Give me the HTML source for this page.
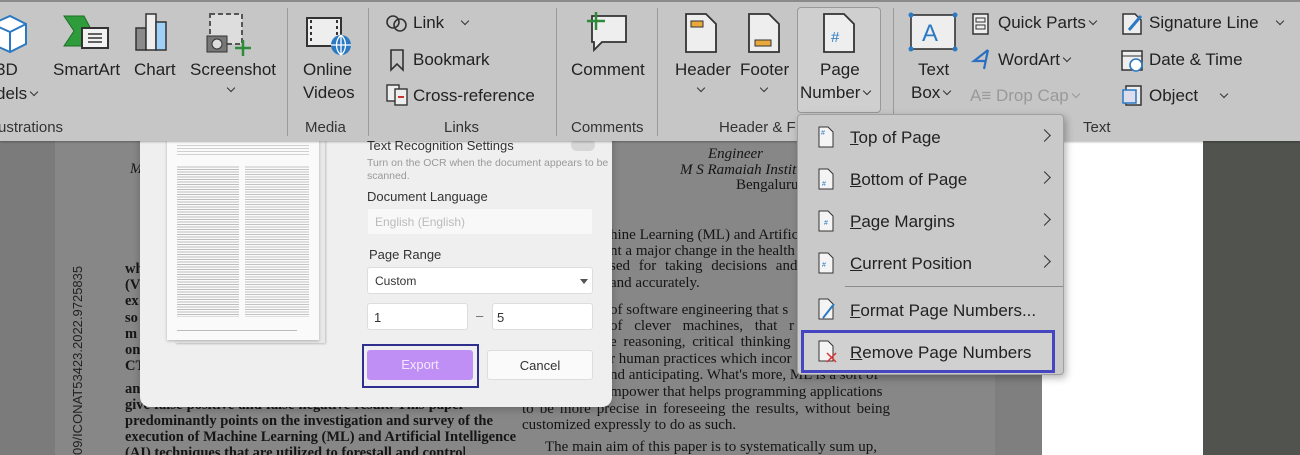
<!DOCTYPE html>
<html><head><meta charset="utf-8">
<style>
*{margin:0;padding:0;box-sizing:border-box}
html,body{width:1300px;height:455px;overflow:hidden}
body{font-family:"Liberation Sans",sans-serif}
#w{position:relative;width:1300px;height:455px;overflow:hidden;background:#7b7b7b}
.a{position:absolute;white-space:nowrap}
.rb{position:absolute;left:0;top:0;width:1300px;height:141px;background:#c6c6c6;border-top:2px solid #8a8a8a;box-shadow:0 1px 2px rgba(0,0,0,.3)}
.t{font-size:17px;color:#222;position:absolute;white-space:nowrap}
.g{font-size:15px;color:#333;position:absolute;white-space:nowrap}
.sep{position:absolute;width:1px;background:#9a9a9a;top:8px;height:128px}
.cv{display:inline-block;width:6px;height:6px;border-right:1.3px solid #333;border-bottom:1.3px solid #333;transform:rotate(45deg);margin-left:4px;vertical-align:4px}
.doc{position:absolute;font-family:"Liberation Serif",serif;color:#151515;white-space:nowrap;line-height:1}
.lb{font-weight:bold;font-size:14.5px;left:125px;width:340px;text-align:justify;text-align-last:justify}
.rt{font-size:15px}
.mi{position:absolute;left:850px;font-size:17px;color:#222;white-space:nowrap}
.mi u{text-decoration:underline}
.chev{position:absolute;left:1040px;width:9px;height:9px;border-right:1.5px solid #333;border-top:1.5px solid #333;transform:rotate(45deg)}
.dl{font-size:13px;color:#333}
.box{position:absolute;background:#fff;border:1px solid #ddd;border-radius:3px}
</style></head><body><div id="w">
<div class="a" style="left:55px;top:140px;width:940px;height:315px;background:#878787"></div>
<div class="a" style="left:995px;top:140px;width:47px;height:315px;background:#7f7f7f"></div>
<div class="a" style="left:1042px;top:140px;width:161px;height:315px;background:#fff"></div>
<div class="a" style="left:1203px;top:140px;width:97px;height:315px;background:#50534e"></div>
<div class="doc" style="left:71px;top:455px;font-family:'Liberation Sans',sans-serif;font-size:13px;color:#222;transform:rotate(-90deg);transform-origin:0 0;">09/ICONAT53423.2022.9725835</div>
<div class="doc rt" style="left:130px;top:162px;font-style:italic">M</div>
<div class="doc rt" style="left:708px;top:147px;font-style:italic">Engineer</div>
<div class="doc rt" style="left:680px;top:163px;font-style:italic">M S Ramaiah Institu</div>
<div class="doc rt" style="left:736px;top:178px">Bengaluru,</div>
<div class="doc rt" style="left:610px;top:228px">hine Learning (ML) and Artific</div>
<div class="doc rt" style="left:610px;top:244px">nt a major change in the health</div>
<div class="doc rt" style="left:610px;top:259px;word-spacing:5px">sed for taking decisions and</div>
<div class="doc rt" style="left:610px;top:276px">and accurately.</div>
<div class="doc rt" style="left:610px;top:303px">of software engineering that s</div>
<div class="doc rt" style="left:610px;top:319px;word-spacing:8px">of clever machines, that r</div>
<div class="doc rt" style="left:610px;top:335px;word-spacing:3px">e reasoning, critical thinking</div>
<div class="doc rt" style="left:610px;top:352px">r human practices which incor</div>
<div class="doc rt" style="left:610px;top:368px">nd anticipating. What's more, ML is a sort of</div>
<div class="doc rt" style="left:610px;top:385px">mpower that helps programming applications</div>
<div class="doc rt" style="left:522px;top:402px;width:368px;text-align:justify;text-align-last:justify">to be more precise in foreseeing the results, without being</div>
<div class="doc rt" style="left:522px;top:418px">customized expressly to do as such.</div>
<div class="doc rt" style="left:545px;top:440px">The main aim of this paper is to systematically sum up,</div>
<div class="doc lb" style="top:262px">wh</div>
<div class="doc lb" style="top:278px">(V</div>
<div class="doc lb" style="top:294px">ex</div>
<div class="doc lb" style="top:311px">so</div>
<div class="doc lb" style="top:327px">m</div>
<div class="doc lb" style="top:343px">on</div>
<div class="doc lb" style="top:359px">CT</div>
<div class="doc lb" style="top:382px">an</div>
<div class="doc lb" style="top:398px">give false positive and false negative result. This paper</div>
<div class="doc lb" style="top:414px">predominantly points on the investigation and survey of the</div>
<div class="doc lb" style="top:430px">execution of Machine Learning (ML) and Artificial Intelligence</div>
<div class="doc lb" style="top:440px;height:15px;overflow:hidden;padding-top:6px">(AI) techniques that are utilized to forestall and control the</div>

<div class="a" style="left:140px;top:128px;width:472px;height:279px;background:#efefef;border-radius:10px;box-shadow:0 2px 8px rgba(0,0,0,.25)"></div>
<div class="a" style="left:175px;top:140px;width:150px;height:203px;background:#e8e8e8;box-shadow:1px 1px 2px rgba(0,0,0,.2)"></div>
<div class="a" style="left:167px;top:140px;width:152px;height:200px;background:#fafafa;box-shadow:0 1px 3px rgba(0,0,0,.25)"></div>
<div class="a" style="left:177px;top:143px;width:132px;height:12px;background:repeating-linear-gradient(#fafafa 0 2px,#d0d0d0 2px 3px)"></div>
<div class="a" style="left:177px;top:165px;width:62px;height:152px;background:repeating-linear-gradient(#fafafa 0 1.5px,#bdbdbd 1.5px 2.5px)"></div>
<div class="a" style="left:245px;top:165px;width:64px;height:152px;background:repeating-linear-gradient(#fafafa 0 1.5px,#c4c4c4 1.5px 2.5px)"></div>
<div class="a" style="left:177px;top:330px;width:120px;height:1px;background:#bbb"></div>
<div class="a dl" style="left:367px;top:138px">Text Recognition Settings</div>
<div class="a" style="left:571px;top:139px;width:24px;height:12px;border-radius:6px;background:#d6d6d6"></div>
<div class="a" style="left:367px;top:157px;font-size:10.5px;color:#999">Turn on the OCR when the document appears to be</div>
<div class="a" style="left:367px;top:170px;font-size:10.5px;color:#999">scanned.</div>
<div class="a dl" style="left:367px;top:189px">Document Language</div>
<div class="box" style="left:367px;top:208px;width:226px;height:27px;background:#f8f8f8;border-color:#eee"></div>
<div class="a" style="left:375px;top:215px;font-size:12px;color:#bbb">English (English)</div>
<div class="a dl" style="left:369px;top:247px">Page Range</div>
<div class="box" style="left:367px;top:267px;width:226px;height:27px"></div>
<div class="a" style="left:375px;top:274px;font-size:12px;color:#333">Custom</div>
<div class="a" style="left:580px;top:279px;border:4px solid transparent;border-top:5px solid #555"></div>
<div class="box" style="left:367px;top:303px;width:101px;height:27px"></div>
<div class="a" style="left:374px;top:310px;font-size:13px;color:#333">1</div>
<div class="a" style="left:476px;top:308px;font-size:13px;color:#666">–</div>
<div class="box" style="left:492px;top:303px;width:101px;height:27px"></div>
<div class="a" style="left:497px;top:310px;font-size:13px;color:#333">5</div>
<div class="a" style="left:362px;top:344px;width:117px;height:44px;border:2px solid #2f2f8f"></div>
<div class="a" style="left:367px;top:350px;width:106px;height:30px;background:#c08ff5;border-radius:3px;color:#f3e8ff;font-size:13px;text-align:center;line-height:30px">Export</div>
<div class="box" style="left:487px;top:350px;width:106px;height:30px;text-align:center;line-height:29px;font-size:13px;color:#333;background:#fafafa">Cancel</div>

<div class="rb"></div>
<svg class="a" style="left:0;top:14px" width="30" height="40"><path d="M-8 10 L10 2 L26 10 L26 30 L10 38 L-8 30Z M10 18 L26 10 M10 18 L10 38 M10 18 L-8 10" fill="#fff" stroke="#2b79c2" stroke-width="2"/></svg>
<div class="t" style="left:-4px;top:60px">3D</div>
<div class="t" style="left:-4px;top:84px">dels<span class="cv"></span></div>
<svg class="a" style="left:62px;top:14px" width="50" height="36"><path d="M2 2 H22 L30 17 L22 32 H2 L12 17Z" fill="#2e9c3a" stroke="#1f6e28"/><rect x="20" y="14" width="26" height="20" fill="#f2f2f2" stroke="#333" stroke-width="2"/><path d="M26 20 H40 M26 24 H40 M26 28 H40" stroke="#333" stroke-width="1.5"/></svg>
<div class="t" style="left:53px;top:60px">SmartArt</div>
<svg class="a" style="left:134px;top:12px" width="40" height="40"><rect x="2" y="16" width="10" height="22" fill="#8b8b8b" stroke="#333" stroke-width="1.5"/><rect x="12" y="2" width="10" height="36" fill="#eee" stroke="#333" stroke-width="1.5"/><rect x="22" y="10" width="10" height="28" fill="#9fd0f5" stroke="#333" stroke-width="1.5"/></svg>
<div class="t" style="left:134px;top:60px">Chart</div>
<svg class="a" style="left:205px;top:12px" width="52" height="44"><rect x="5" y="2" width="32" height="30" fill="#ddd" stroke="#555" stroke-width="2" stroke-dasharray="5 3"/><rect x="2" y="24" width="20" height="16" fill="#777" stroke="#333"/><circle cx="12" cy="32" r="5" fill="#ddd" stroke="#333"/><path d="M38 28 V44 M30 36 H46" stroke="#2e8b3a" stroke-width="2.5"/></svg>
<div class="t" style="left:190px;top:60px">Screenshot</div>
<div class="t" style="left:224px;top:80px"><span class="cv"></span></div>
<div class="sep" style="left:287px"></div>
<svg class="a" style="left:305px;top:16px" width="48" height="40"><rect x="2" y="2" width="34" height="28" fill="#eee" stroke="#333" stroke-width="2"/><path d="M6 4 V28 M32 4 V28" stroke="#333" stroke-width="2" stroke-dasharray="3 3"/><circle cx="36" cy="29" r="10" fill="#2b79c2"/><path d="M26 29 H46 M36 19 V39 M36 19 C30 24 30 34 36 39 M36 19 C42 24 42 34 36 39" stroke="#fff" fill="none" stroke-width="1.3"/></svg>
<div class="t" style="left:303px;top:60px">Online</div>
<div class="t" style="left:303px;top:83px">Videos</div>
<div class="sep" style="left:368px"></div>
<svg class="a" style="left:385px;top:14px" width="24" height="18"><circle cx="8" cy="8" r="6" fill="none" stroke="#333" stroke-width="1.6"/><circle cx="15" cy="11" r="6" fill="none" stroke="#333" stroke-width="1.6"/></svg>
<div class="t" style="left:413px;top:13px">Link&nbsp;&nbsp;&nbsp;<span class="cv"></span></div>
<svg class="a" style="left:388px;top:48px" width="18" height="24"><path d="M3 2 H15 V22 L9 16 L3 22Z" fill="none" stroke="#333" stroke-width="1.6"/></svg>
<div class="t" style="left:413px;top:50px">Bookmark</div>
<svg class="a" style="left:385px;top:83px" width="24" height="24"><rect x="2" y="2" width="12" height="16" fill="#eee" stroke="#333" stroke-width="1.4"/><rect x="10" y="6" width="12" height="16" fill="#eee" stroke="#333" stroke-width="1.4"/><path d="M13 14 H19" stroke="#c33" stroke-width="2"/></svg>
<div class="t" style="left:413px;top:86px">Cross-reference</div>
<div class="sep" style="left:556px"></div>
<svg class="a" style="left:582px;top:10px" width="50" height="42"><path d="M10 6 H44 V32 H20 L12 40 V32 H10Z" fill="#eee" stroke="#333" stroke-width="1.8"/><path d="M14 2 V20 M5 11 H23" stroke="#2e8b3a" stroke-width="2.5"/></svg>
<div class="t" style="left:571px;top:60px">Comment</div>
<div class="sep" style="left:657px"></div>
<svg class="a" style="left:684px;top:12px" width="34" height="42"><path d="M2 2 H22 L32 12 V40 H2Z" fill="#eee" stroke="#333" stroke-width="1.8"/><rect x="7" y="9" width="12" height="6" fill="#e8a93a" stroke="#333"/></svg>
<div class="t" style="left:675px;top:60px">Header</div>
<div class="t" style="left:694px;top:80px"><span class="cv"></span></div>
<svg class="a" style="left:747px;top:12px" width="34" height="42"><path d="M2 2 H22 L32 12 V40 H2Z" fill="#eee" stroke="#333" stroke-width="1.8"/><rect x="8" y="28" width="16" height="6" fill="#e8a93a" stroke="#333"/></svg>
<div class="t" style="left:740px;top:60px">Footer</div>
<div class="t" style="left:757px;top:80px"><span class="cv"></span></div>
<div class="a" style="left:797px;top:7px;width:84px;height:106px;border:1px solid #999;border-radius:4px;background:#cfcfcf"></div>
<svg class="a" style="left:822px;top:12px" width="34" height="42"><path d="M2 2 H22 L32 12 V40 H2Z" fill="#eee" stroke="#333" stroke-width="1.8"/><text x="9" y="30" font-size="15" fill="#2b79c2" font-family="Liberation Sans">#</text></svg>
<div class="t" style="left:820px;top:60px">Page</div>
<div class="t" style="left:800px;top:83px">Number<span class="cv"></span></div>
<div class="sep" style="left:893px"></div>
<svg class="a" style="left:908px;top:12px" width="50" height="40"><rect x="3" y="3" width="44" height="34" fill="#eee" stroke="#333" stroke-width="1.6"/><g fill="#2b79c2"><circle cx="3" cy="3" r="2.5"/><circle cx="47" cy="3" r="2.5"/><circle cx="3" cy="37" r="2.5"/><circle cx="47" cy="37" r="2.5"/></g><text x="14" y="29" font-size="24" fill="#2b79c2" font-family="Liberation Sans">A</text></svg>
<div class="t" style="left:918px;top:60px">Text</div>
<div class="t" style="left:911px;top:83px">Box<span class="cv"></span></div>
<svg class="a" style="left:971px;top:12px" width="20" height="24"><rect x="2" y="2" width="15" height="20" fill="#eee" stroke="#333" stroke-width="1.5"/><rect x="5" y="6" width="9" height="4" fill="none" stroke="#333"/><rect x="5" y="13" width="9" height="4" fill="none" stroke="#333"/></svg>
<div class="t" style="left:998px;top:13px">Quick Parts<span class="cv"></span></div>
<svg class="a" style="left:970px;top:47px" width="22" height="24"><path d="M18 3 L4 14 L16 14 M18 3 L14 22" fill="none" stroke="#2b6fc2" stroke-width="2.2"/></svg>
<div class="t" style="left:998px;top:50px">WordArt<span class="cv"></span></div>
<div class="t" style="left:970px;top:86px;color:#999">A≡ Drop Cap<span class="cv" style="border-color:#999"></span></div>
<svg class="a" style="left:1121px;top:12px" width="24" height="24"><path d="M2 2 H14 L20 8 V22 H2Z" fill="#eee" stroke="#333" stroke-width="1.5"/><path d="M8 18 L20 4" stroke="#2b79c2" stroke-width="3"/></svg>
<div class="t" style="left:1149px;top:13px">Signature Line&nbsp;&nbsp;&nbsp;<span class="cv"></span></div>
<svg class="a" style="left:1120px;top:47px" width="26" height="26"><rect x="2" y="4" width="20" height="19" fill="#eee" stroke="#333" stroke-width="1.5"/><path d="M2 9 H22" stroke="#333"/><circle cx="16" cy="18" r="6" fill="#fff" stroke="#2b79c2" stroke-width="1.6"/></svg>
<div class="t" style="left:1149px;top:50px">Date &amp; Time</div>
<svg class="a" style="left:1121px;top:84px" width="22" height="24"><rect x="5" y="2" width="15" height="19" fill="#eee" stroke="#333" stroke-width="1.5"/><rect x="2" y="6" width="13" height="13" fill="#dde" stroke="#2b79c2" stroke-width="1.5"/></svg>
<div class="t" style="left:1149px;top:86px">Object&nbsp;&nbsp;&nbsp;&nbsp;<span class="cv"></span></div>
<div class="g" style="left:-2px;top:119px">ustrations</div>
<div class="g" style="left:305px;top:119px">Media</div>
<div class="g" style="left:444px;top:119px">Links</div>
<div class="g" style="left:571px;top:119px">Comments</div>
<div class="g" style="left:719px;top:119px">Header &amp; F</div>
<div class="g" style="left:1083px;top:119px">Text</div>

<div class="a" style="left:797px;top:114px;width:267px;height:261px;background:#c9c9c9;border:1px solid #a0a0a0;border-radius:4px;box-shadow:2px 3px 8px rgba(0,0,0,.3)"></div>
<svg class="a" style="left:818px;top:126px" width="16" height="22"><path d="M1 1 H10 L15 6 V21 H1Z" fill="#f4f4f4" stroke="#333"/><text x="3" y="9" font-size="7" fill="#2b79c2">#</text></svg>
<div class="mi" style="top:128px"><u>T</u>op of Page</div><div class="chev" style="top:131px"></div>
<svg class="a" style="left:818px;top:168px" width="16" height="22"><path d="M1 1 H10 L15 6 V21 H1Z" fill="#f4f4f4" stroke="#333"/><text x="4" y="18" font-size="7" fill="#2b79c2">#</text></svg>
<div class="mi" style="top:170px"><u>B</u>ottom of Page</div><div class="chev" style="top:173px"></div>
<svg class="a" style="left:818px;top:210px" width="16" height="22"><path d="M1 1 H10 L15 6 V21 H1Z" fill="#f4f4f4" stroke="#333"/><text x="6" y="15" font-size="7" fill="#2b79c2">#</text></svg>
<div class="mi" style="top:212px"><u>P</u>age Margins</div><div class="chev" style="top:215px"></div>
<svg class="a" style="left:818px;top:252px" width="16" height="22"><path d="M1 1 H10 L15 6 V21 H1Z" fill="#f4f4f4" stroke="#333"/><text x="4" y="15" font-size="7" fill="#2b79c2">#</text></svg>
<div class="mi" style="top:254px"><u>C</u>urrent Position</div><div class="chev" style="top:257px"></div>
<div class="a" style="left:845px;top:286px;width:218px;height:1px;background:#8c8c8c"></div>
<svg class="a" style="left:818px;top:298px" width="18" height="24"><path d="M1 1 H10 L15 6 V21 H1Z" fill="#f4f4f4" stroke="#333"/><path d="M5 20 L16 6" stroke="#2b79c2" stroke-width="2"/></svg>
<div class="mi" style="top:301px"><u>F</u>ormat Page Numbers...</div>
<div class="a" style="left:801px;top:330px;width:254px;height:43px;border:3px solid #4646c0;background:#d0d0d0"></div>
<svg class="a" style="left:818px;top:340px" width="20" height="24"><path d="M1 1 H10 L15 6 V21 H1Z" fill="#f4f4f4" stroke="#333"/><path d="M9 13 L18 22 M18 13 L9 22" stroke="#d33" stroke-width="1.5"/></svg>
<div class="mi" style="top:343px"><u>R</u>emove Page Numbers</div>
</div></body></html>
